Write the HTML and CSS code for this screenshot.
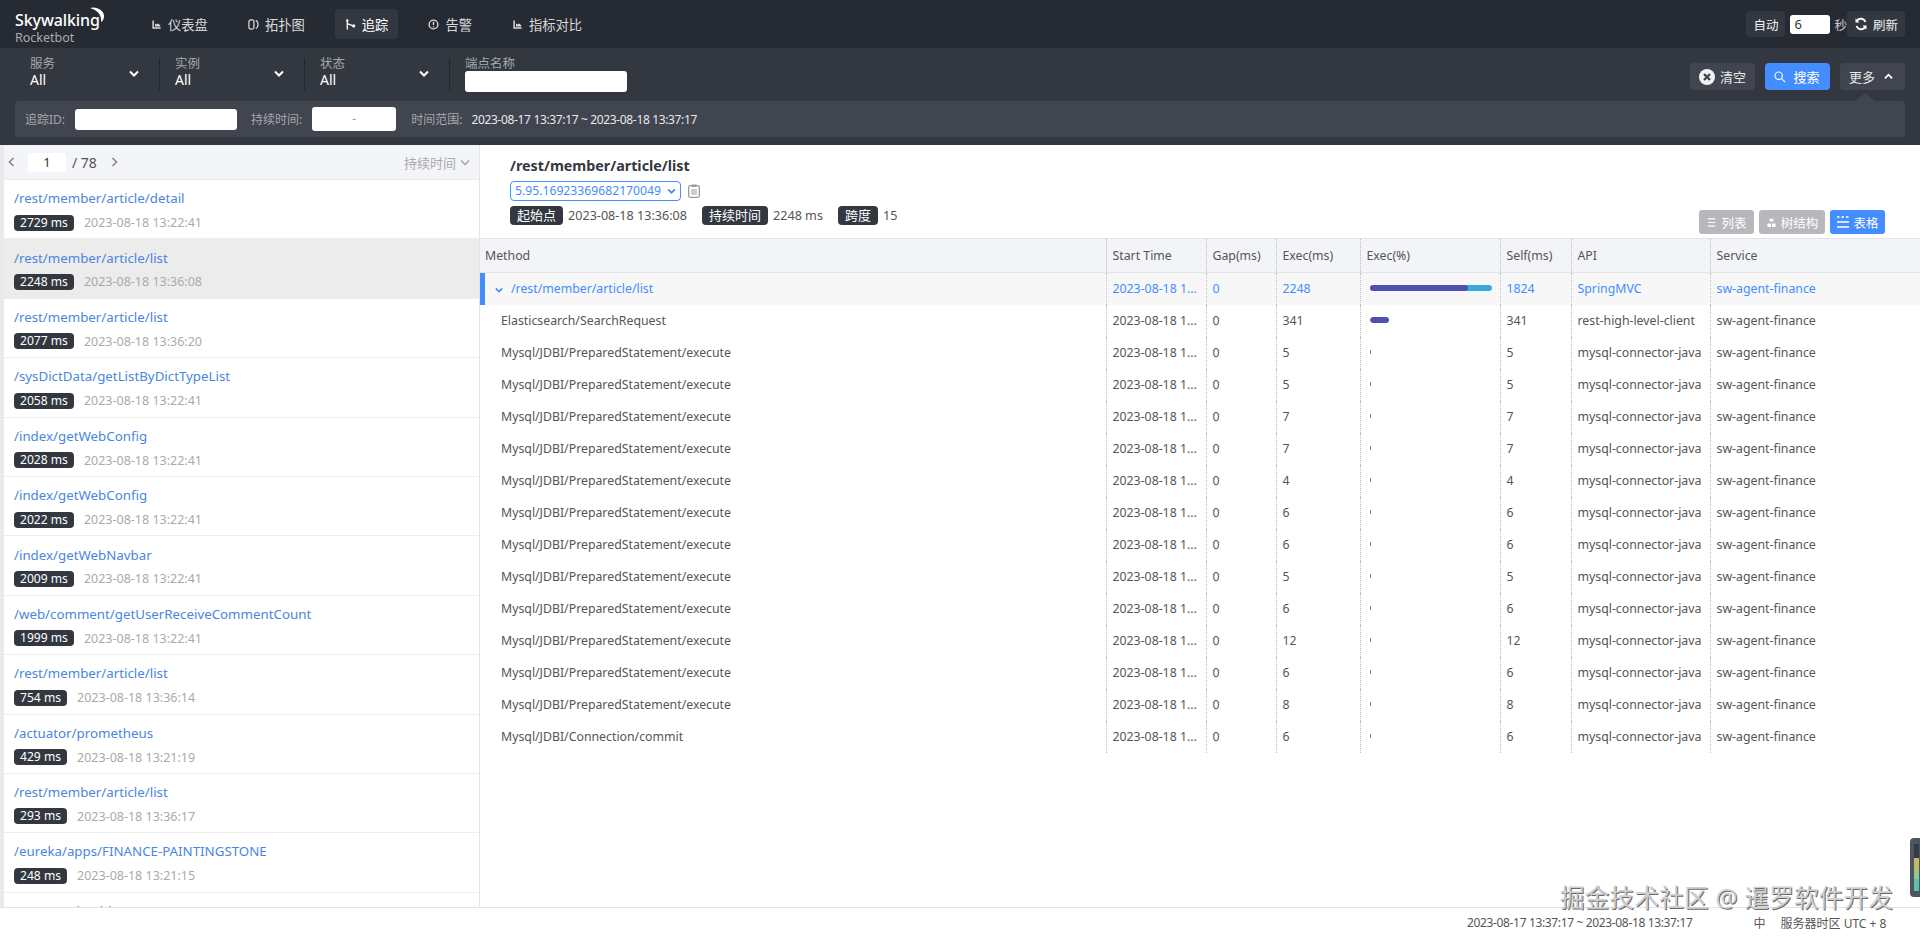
FILE: index.html
```html
<!DOCTYPE html>
<html lang="zh">
<head>
<meta charset="utf-8">
<title>Skywalking Rocketbot</title>
<link rel="stylesheet" href="styles.css">
</head>
<body>
<header class="topbar">
  <div class="logo">
    <div class="logo-main">Skywalking<svg class="logo-moon" viewBox="0 0 18 18"><path d="M2 2C8 0 16 4 16 10C16 13 15 15 13 16C14 10 10 4 2 2z" fill="#fff"/></svg></div>
    <div class="logo-sub">Rocketbot</div>
  </div>
  <nav class="nav">
    <a class="nav-item"><svg class="nav-icon" viewBox="0 0 12 12"><path d="M0.500 0.500v11h11v-2H2.500v-9z M4 8.500V4.500l2 1.500 2-1.500 3 2.500v1.500z" fill="currentColor"/></svg>仪表盘</a>
    <a class="nav-item"><svg class="nav-icon topo" viewBox="0 0 12 12"><rect x="1" y="1" width="5.500" height="10" rx="2" fill="none" stroke="currentColor" stroke-width="1.400"/><path d="M8.500 1.500c2 1 2.500 2.500 2.500 4.500s-.5 3.500-2.500 4.500" fill="none" stroke="currentColor" stroke-width="1.400"/></svg>拓扑图</a>
    <a class="nav-item active"><svg class="nav-icon topo" viewBox="0 0 12 12"><path d="M2.500 1v10.500M2.500 5 9 7.500" fill="none" stroke="currentColor" stroke-width="1.400"/><circle cx="2.500" cy="1.500" r="1.300" fill="currentColor"/><circle cx="9.500" cy="7.500" r="1.700" fill="currentColor"/></svg>追踪</a>
    <a class="nav-item"><svg class="nav-icon topo" viewBox="0 0 12 12"><circle cx="6" cy="6" r="4.800" fill="none" stroke="currentColor" stroke-width="1.500"/><path d="M6 3v3.500M6 7.800v1.200" stroke="currentColor" stroke-width="1.500"/></svg>告警</a>
    <a class="nav-item"><svg class="nav-icon" viewBox="0 0 12 12"><path d="M0.500 0.500v11h11v-2H2.500v-9z M4 8.500V4.500l2 1.500 2-1.500 3 2.500v1.500z" fill="currentColor"/></svg>指标对比</a>
  </nav>
  <div class="top-actions">
    <button class="btn-top">自动</button>
    <input class="auto-input" value="6">
    <span class="sec">秒</span>
    <button class="btn-top"><svg class="refresh" viewBox="0 0 14 14"><path d="M11.500 5A5 5 0 0 0 3 3.500M2.500 9A5 5 0 0 0 11 10.500" fill="none" stroke="#fff" stroke-width="2"/><path d="M1.500 1.500v4h4zM12.500 12.500v-4h-4z" fill="#fff"/></svg>刷新</button>
  </div>
</header>

<section class="filters">
  <div class="filter-row">
    <div class="drop"><div class="drop-text"><div class="drop-label">服务</div><div class="drop-val">All</div></div><svg class="chev" viewBox="0 0 10 7"><path d="M1 1.500 5 5.500 9 1.500" fill="none" stroke="#fff" stroke-width="2"/></svg></div>
    <div class="drop"><div class="drop-text"><div class="drop-label">实例</div><div class="drop-val">All</div></div><svg class="chev" viewBox="0 0 10 7"><path d="M1 1.500 5 5.500 9 1.500" fill="none" stroke="#fff" stroke-width="2"/></svg></div>
    <div class="drop"><div class="drop-text"><div class="drop-label">状态</div><div class="drop-val">All</div></div><svg class="chev" viewBox="0 0 10 7"><path d="M1 1.500 5 5.500 9 1.500" fill="none" stroke="#fff" stroke-width="2"/></svg></div>
    <div class="endpoint"><div class="drop-label">端点名称</div><input class="endpoint-input"></div>
    <div class="filter-actions">
      <button class="btn-f"><svg class="i-clear" viewBox="0 0 16 16"><circle cx="8" cy="8" r="8" fill="#f2f2f2"/><path d="M5 5l6 6M11 5l-6 6" stroke="#41454f" stroke-width="2.400"/></svg>清空</button>
      <button class="btn-f blue"><svg class="i-search" viewBox="0 0 14 14"><circle cx="5.500" cy="5.500" r="4.300" fill="none" stroke="#fff" stroke-width="1.300"/><path d="M8.800 8.800 13 13" stroke="#fff" stroke-width="1.300"/></svg>搜索</button>
      <button class="btn-f">更多<svg class="i-up" viewBox="0 0 10 7"><path d="M1 5.500 5 1.500 9 5.500" fill="none" stroke="#fff" stroke-width="2"/></svg></button>
    </div>
  </div>
  <div class="more-panel">
    <span class="more-label">追踪ID:</span><input class="id-input">
    <span class="more-label lbl-dur">持续时间:</span><div class="dur-input">-</div>
    <span class="more-label lbl-time">时间范围:</span><span class="more-val">2023-08-17 13:37:17 ~ 2023-08-18 13:37:17</span>
    <i class="more-arrow"></i>
  </div>
</section>

<main class="main">
  <aside class="side">
    <div class="pager">
      <svg class="pg-chev" viewBox="0 0 7 10"><path d="M5.500 1 1.500 5 5.500 9" fill="none" stroke="#888" stroke-width="1.600"/></svg>
      <div class="pg-input">1</div>
      <span class="pg-total">/ 78</span>
      <svg class="pg-chev" viewBox="0 0 7 10"><path d="M1.500 1 5.500 5 1.500 9" fill="none" stroke="#888" stroke-width="1.600"/></svg>
      <span class="pg-sort">持续时间<svg class="pg-down" viewBox="0 0 10 7"><path d="M1 1.500 5 5.500 9 1.500" fill="none" stroke="#aaa" stroke-width="1.600"/></svg></span>
    </div>
    <div class="item"><a class="item-link">/rest/member/article/detail</a><div class="item-meta"><span class="ms">2729 ms</span><span class="item-time">2023-08-18 13:22:41</span></div></div>
    <div class="item selected"><a class="item-link">/rest/member/article/list</a><div class="item-meta"><span class="ms">2248 ms</span><span class="item-time">2023-08-18 13:36:08</span></div></div>
    <div class="item"><a class="item-link">/rest/member/article/list</a><div class="item-meta"><span class="ms">2077 ms</span><span class="item-time">2023-08-18 13:36:20</span></div></div>
    <div class="item"><a class="item-link">/sysDictData/getListByDictTypeList</a><div class="item-meta"><span class="ms">2058 ms</span><span class="item-time">2023-08-18 13:22:41</span></div></div>
    <div class="item"><a class="item-link">/index/getWebConfig</a><div class="item-meta"><span class="ms">2028 ms</span><span class="item-time">2023-08-18 13:22:41</span></div></div>
    <div class="item"><a class="item-link">/index/getWebConfig</a><div class="item-meta"><span class="ms">2022 ms</span><span class="item-time">2023-08-18 13:22:41</span></div></div>
    <div class="item"><a class="item-link">/index/getWebNavbar</a><div class="item-meta"><span class="ms">2009 ms</span><span class="item-time">2023-08-18 13:22:41</span></div></div>
    <div class="item"><a class="item-link">/web/comment/getUserReceiveCommentCount</a><div class="item-meta"><span class="ms">1999 ms</span><span class="item-time">2023-08-18 13:22:41</span></div></div>
    <div class="item"><a class="item-link">/rest/member/article/list</a><div class="item-meta"><span class="ms">754 ms</span><span class="item-time">2023-08-18 13:36:14</span></div></div>
    <div class="item"><a class="item-link">/actuator/prometheus</a><div class="item-meta"><span class="ms">429 ms</span><span class="item-time">2023-08-18 13:21:19</span></div></div>
    <div class="item"><a class="item-link">/rest/member/article/list</a><div class="item-meta"><span class="ms">293 ms</span><span class="item-time">2023-08-18 13:36:17</span></div></div>
    <div class="item"><a class="item-link">/eureka/apps/FINANCE-PAINTINGSTONE</a><div class="item-meta"><span class="ms">248 ms</span><span class="item-time">2023-08-18 13:21:15</span></div></div>
    <div class="item"><a class="item-link">/actuator/health</a></div>
  </aside>

  <section class="detail">
    <div class="detail-head">
      <div class="detail-info">
        <h1 class="detail-title">/rest/member/article/list</h1>
        <div class="trace-line">
          <div class="trace-select"><span>5.95.16923369682170049</span><svg class="sel-chev" viewBox="0 0 10 7"><path d="M1 1.500 5 5.500 9 1.500" fill="none" stroke="#448dfe" stroke-width="2"/></svg></div>
          <svg class="i-clip" viewBox="0 0 12 14"><rect x="0.700" y="1.700" width="10.600" height="11.600" rx="1.500" fill="none" stroke="#999" stroke-width="1.300"/><rect x="3.500" y="0.500" width="5" height="2.500" fill="#999"/><path d="M3 6h6M3 8h6M3 10h6" stroke="#999"/></svg>
        </div>
        <div class="trace-meta">
          <span class="tag">起始点</span><span class="meta-v">2023-08-18 13:36:08</span>
          <span class="tag">持续时间</span><span class="meta-v">2248 ms</span>
          <span class="tag">跨度</span><span class="meta-v">15</span>
        </div>
      </div>
      <div class="views">
        <button class="view"><svg class="view-i" viewBox="0 0 12 12"><path d="M2 2h8M2 6h8M2 10h8" stroke="#fff" stroke-width="1.200"/></svg>列表</button>
        <button class="view wide"><svg class="view-i" viewBox="0 0 12 12"><path d="M4 2h4v3H4zM1.500 7h4v4h-4zM6.500 7h4v4h-4z" fill="#fff"/></svg>树结构</button>
        <button class="view on"><svg class="view-i big" viewBox="0 0 14 14"><path d="M1 2h2.500M5.500 2H8M10 2h2.500M1 7h12M1 12h12" stroke="#fff" stroke-width="1.600"/></svg>表格</button>
      </div>
    </div>
    <table class="spans">
      <colgroup><col class="c1"><col class="c2"><col class="c3"><col class="c4"><col class="c5"><col class="c6"><col class="c7"><col class="c8"></colgroup>
      <thead><tr><th>Method</th><th>Start Time</th><th>Gap(ms)</th><th>Exec(ms)</th><th>Exec(%)</th><th>Self(ms)</th><th>API</th><th>Service</th></tr></thead>
      <tbody id="rows">
        <tr class="root"><td class="m root-m"><svg class="root-chev" viewBox="0 0 10 7"><path d="M1 1.500 5 5.500 9 1.500" fill="none" stroke="#448dfe" stroke-width="2"/></svg>/rest/member/article/list</td><td>2023-08-18 1...</td><td>0</td><td>2248</td><td class="pc"><div class="track"><div class="fill" style="width:81%"></div></div></td><td>1824</td><td>SpringMVC</td><td>sw-agent-finance</td></tr>
        <tr><td class="m">Elasticsearch/SearchRequest</td><td>2023-08-18 1...</td><td>0</td><td>341</td><td class="pc"><div class="track none"><div class="fill" style="width:16%"></div></div></td><td>341</td><td>rest-high-level-client</td><td>sw-agent-finance</td></tr>
        <tr><td class="m">Mysql/JDBI/PreparedStatement/execute</td><td>2023-08-18 1...</td><td>0</td><td>5</td><td class="pc"><div class="track none"><div class="fill tiny"></div></div></td><td>5</td><td>mysql-connector-java</td><td>sw-agent-finance</td></tr>
        <tr><td class="m">Mysql/JDBI/PreparedStatement/execute</td><td>2023-08-18 1...</td><td>0</td><td>5</td><td class="pc"><div class="track none"><div class="fill tiny"></div></div></td><td>5</td><td>mysql-connector-java</td><td>sw-agent-finance</td></tr>
        <tr><td class="m">Mysql/JDBI/PreparedStatement/execute</td><td>2023-08-18 1...</td><td>0</td><td>7</td><td class="pc"><div class="track none"><div class="fill tiny"></div></div></td><td>7</td><td>mysql-connector-java</td><td>sw-agent-finance</td></tr>
        <tr><td class="m">Mysql/JDBI/PreparedStatement/execute</td><td>2023-08-18 1...</td><td>0</td><td>7</td><td class="pc"><div class="track none"><div class="fill tiny"></div></div></td><td>7</td><td>mysql-connector-java</td><td>sw-agent-finance</td></tr>
        <tr><td class="m">Mysql/JDBI/PreparedStatement/execute</td><td>2023-08-18 1...</td><td>0</td><td>4</td><td class="pc"><div class="track none"><div class="fill tiny"></div></div></td><td>4</td><td>mysql-connector-java</td><td>sw-agent-finance</td></tr>
        <tr><td class="m">Mysql/JDBI/PreparedStatement/execute</td><td>2023-08-18 1...</td><td>0</td><td>6</td><td class="pc"><div class="track none"><div class="fill tiny"></div></div></td><td>6</td><td>mysql-connector-java</td><td>sw-agent-finance</td></tr>
        <tr><td class="m">Mysql/JDBI/PreparedStatement/execute</td><td>2023-08-18 1...</td><td>0</td><td>6</td><td class="pc"><div class="track none"><div class="fill tiny"></div></div></td><td>6</td><td>mysql-connector-java</td><td>sw-agent-finance</td></tr>
        <tr><td class="m">Mysql/JDBI/PreparedStatement/execute</td><td>2023-08-18 1...</td><td>0</td><td>5</td><td class="pc"><div class="track none"><div class="fill tiny"></div></div></td><td>5</td><td>mysql-connector-java</td><td>sw-agent-finance</td></tr>
        <tr><td class="m">Mysql/JDBI/PreparedStatement/execute</td><td>2023-08-18 1...</td><td>0</td><td>6</td><td class="pc"><div class="track none"><div class="fill tiny"></div></div></td><td>6</td><td>mysql-connector-java</td><td>sw-agent-finance</td></tr>
        <tr><td class="m">Mysql/JDBI/PreparedStatement/execute</td><td>2023-08-18 1...</td><td>0</td><td>12</td><td class="pc"><div class="track none"><div class="fill tiny"></div></div></td><td>12</td><td>mysql-connector-java</td><td>sw-agent-finance</td></tr>
        <tr><td class="m">Mysql/JDBI/PreparedStatement/execute</td><td>2023-08-18 1...</td><td>0</td><td>6</td><td class="pc"><div class="track none"><div class="fill tiny"></div></div></td><td>6</td><td>mysql-connector-java</td><td>sw-agent-finance</td></tr>
        <tr><td class="m">Mysql/JDBI/PreparedStatement/execute</td><td>2023-08-18 1...</td><td>0</td><td>8</td><td class="pc"><div class="track none"><div class="fill tiny"></div></div></td><td>8</td><td>mysql-connector-java</td><td>sw-agent-finance</td></tr>
        <tr><td class="m">Mysql/JDBI/Connection/commit</td><td>2023-08-18 1...</td><td>0</td><td>6</td><td class="pc"><div class="track none"><div class="fill tiny"></div></div></td><td>6</td><td>mysql-connector-java</td><td>sw-agent-finance</td></tr>
      </tbody>
    </table>
  </section>
</main>

<footer class="footer">
  <span class="foot-range">2023-08-17 13:37:17 ~ 2023-08-18 13:37:17</span>
  <span class="foot-lang">中</span>
  <span class="foot-tz">服务器时区 UTC + 8</span>
</footer>

<div class="watermark">掘金技术社区 @ 暹罗软件开发</div>
<div class="widget"><div class="widget-bars"></div></div>
</body>
</html>
```
FILE: styles.css
```css
* { box-sizing: border-box; }
html, body { margin: 0; height: 100%; overflow: hidden; }
body {
  display: flex;
  flex-direction: column;
  font-family: "Noto Sans", "Noto Sans CJK SC", sans-serif;
  font-size: 13px;
  color: #3d444f;
  background: #fff;
  position: relative;
}
button { font-family: inherit; border: 0; padding: 0; }

/* top bar */
.topbar {
  height: 48px;
  flex: none;
  display: flex;
  align-items: center;
  background: #252a33;
  color: #e8e9ea;
  padding: 0 15px;
}
.logo { width: 126px; flex: none; padding-top: 8px; }
.logo-main { font-size: 16px; line-height: 18px; font-weight: 500; color: #fff; position: relative; letter-spacing: -0.1px; }
.logo-moon { position: absolute; left: 73px; top: -5px; width: 18px; height: 18px; }
.logo-sub { font-size: 12.500px; line-height: 16px; margin-top: 1px; color: #a9acb0; }
.nav { display: flex; }
.nav-item {
  height: 30px;
  display: flex;
  align-items: center;
  padding: 0 10px;
  margin-right: 20px;
  border-radius: 4px;
  font-size: 13.300px;
  color: #d8d9db;
}
.nav-item.active { background: #333840; color: #fff; }
.nav-icon { width: 9px; height: 9px; margin: 0 7px 0 1px; flex: none; }
.nav-icon.topo { width: 11px; height: 11px; margin: 0 6px 0 0; }
.top-actions { margin-left: auto; display: flex; align-items: center; }
.btn-top {
  height: 26px;
  padding: 0 7px;
  border-radius: 4px;
  background: #333840;
  color: #f2f2f2;
  font-size: 12.500px;
  display: flex;
  align-items: center;
}
.auto-input {
  width: 40px;
  height: 19px;
  margin-left: 5px;
  border: 0;
  border-radius: 3px;
  padding: 0 4px;
  font: 13px "Noto Sans", sans-serif;
  color: #333;
}
.sec { font-size: 12.500px; color: #ccc; margin: 0 0 0 4px; }
.refresh { width: 14px; height: 14px; margin-right: 5px; }

/* filters */
.filters {
  height: 97px;
  flex: none;
  background: #333840;
  padding: 8px 15px 8px;
  display: flex;
  flex-direction: column;
  position: relative;
}
.filter-row { display: flex; height: 35px; align-items: center; margin-bottom: 10px; }
.drop {
  width: 145px;
  height: 32px;
  padding: 0 20px 0 15px;
  display: flex;
  align-items: center;
  justify-content: space-between;
  border-right: 1px solid #22262d;
}
.drop-text { margin-top: -2px; }
.drop-label { font-size: 12.500px; line-height: 14px; color: #a5a8ac; }
.drop-val { font-size: 14px; line-height: 18px; color: #fff; }
.chev { width: 10px; height: 7px; }
.endpoint { margin-left: 15px; }
.endpoint .drop-label { line-height: 13px; margin-top: 2px; }
.endpoint-input { display: block; width: 162px; height: 21px; border: 0; border-radius: 3px; background: #fff; margin-top: 1px; }
.filter-actions { margin-left: auto; display: flex; gap: 10px; margin-top: 6px; }
.btn-f {
  width: 65px;
  height: 27px;
  border-radius: 4px;
  background: #41454f;
  color: #e8e9ea;
  font-size: 13px;
  display: flex;
  align-items: center;
  justify-content: center;
}
.btn-f.blue { background: #448dfe; color: #fff; }
.i-clear { width: 16px; height: 16px; margin-right: 5px; }
.i-search { width: 12px; height: 12px; margin-right: 7px; margin-left: -1px; }
.i-up { width: 9px; height: 7px; margin: 0 3px 0 9px; }
.more-panel {
  height: 36px;
  border-radius: 3px;
  background: #41454f;
  display: flex;
  align-items: center;
  padding-left: 10px;
  position: relative;
}
.more-label { font-size: 12px; color: #a5a8ac; white-space: nowrap; }
.id-input { width: 162px; height: 21px; border: 0; border-radius: 3px; margin-left: 10px; background: #fff; }
.lbl-dur { margin-left: 14px; }
.dur-input { width: 84px; height: 24px; margin-left: 10px; border-radius: 3px; background: #fff; color: #999; text-align: center; font-size: 12px; line-height: 24px; }
.lbl-time { margin-left: 15px; }
.more-val { margin-left: 9px; font-size: 12px; letter-spacing: -0.350px; color: #e8e9ea; white-space: nowrap; }
.more-arrow {
  position: absolute;
  right: 30px;
  top: -8px;
  width: 0;
  height: 0;
  border-left: 10px solid transparent;
  border-right: 10px solid transparent;
  border-bottom: 8px solid #41454f;
}

/* main */
.main { flex: 1; min-height: 0; display: flex; background: #fff; }
.side {
  width: 480px;
  flex: none;
  overflow: hidden;
  border-right: 1px solid #e4e4e4;
  border-left: 4px solid #eaeaea;
  background: #fff;
}
.pager {
  height: 35px;
  margin-left: -4px;
  display: flex;
  align-items: center;
  padding: 0 8px 0 8px;
  background: #f3f5f9;
  border-bottom: 1px solid #ebecef;
  color: #555;
}
.pg-chev { width: 7px; height: 10px; flex: none; }
.pg-input { width: 38px; height: 19px; margin: 0 6px 0 13px; background: #fff; border-radius: 3px; text-align: center; font-size: 13px; line-height: 19px; color: #333; }
.pg-total { font-size: 14px; margin-right: 14px; color: #555; }
.pg-sort { margin-left: auto; font-size: 13px; color: #aaa; display: flex; align-items: center; }
.pg-down { width: 10px; height: 7px; margin-left: 4px; margin-right: 1px; }
.item {
  height: 59.4px;
  padding: 8.200px 10px 0;
  border-bottom: 1px solid #eee;
  overflow: hidden;
}
.item.selected { background: #ececec; }
.item-link { display: block; font-size: 13.300px; line-height: 20px; color: #4a86e0; }
.item-meta { display: flex; align-items: center; margin-top: 5.900px; }
.ms { height: 16px; padding: 0 6px; border-radius: 4px; background: #333840; color: #fff; font-size: 12.100px; line-height: 16px; }
.item-time { margin-left: 10px; font-size: 12.500px; color: #aaa; }

/* detail */
.detail { flex: 1; min-width: 0; }
.detail-head { height: 93px; display: flex; justify-content: space-between; padding: 10px 35px 0 30px; }
.detail-title { margin: 0; font-size: 14.300px; line-height: 22px; font-weight: 700; color: #333840; }
.trace-line { display: flex; align-items: center; margin-top: 4px; }
.trace-select {
  width: 171px;
  height: 20px;
  border: 1px solid #448dfe;
  border-radius: 4px;
  color: #448dfe;
  font-size: 12.200px;
  line-height: 18px;
  padding-left: 4px;
  display: flex;
  align-items: center;
  justify-content: space-between;
}
.sel-chev { width: 9px; height: 6px; margin-right: 4px; }
.i-clip { width: 12px; height: 14px; margin-left: 7px; }
.trace-meta { display: flex; align-items: center; margin-top: 5px; }
.tag { height: 19px; padding: 0 7px; border-radius: 4px; background: #333840; color: #fff; font-size: 13px; line-height: 19px; }
.meta-v { margin: 0 15px 0 5px; font-size: 12.600px; color: #555; }
.views { display: flex; gap: 5px; margin-top: 55px; height: 24px; }
.view { width: 55px; height: 24px; border-radius: 3px; background: #b6b8bc; color: #fff; font-size: 12.500px; display: flex; align-items: center; justify-content: center; }
.view.wide { width: 66px; }
.view.on { background: #448dfe; }
.view-i { width: 11px; height: 11px; margin-right: 4px; }
.view-i.big { width: 14px; height: 14px; margin-right: 3px; }
.spans { width: 1440px; table-layout: fixed; border-collapse: collapse; font-size: 12.300px; }
.c1 { width: 626px; }
.c2 { width: 100px; }
.c3 { width: 70px; }
.c4 { width: 84px; }
.c5 { width: 140px; }
.c6 { width: 71px; }
.c7 { width: 139px; }
.c8 { width: 210px; }
.spans th {
  height: 34px;
  padding: 0 6px 1px 6px;
  text-align: left;
  font-weight: 400;
  color: #555;
  background: #f3f4f7;
  border-top: 1px solid #e3e4e7;
  border-bottom: 1px solid #e3e4e7;
  border-left: 1px dotted #bbb;
}
.spans th:first-child { border-left: 0; padding-left: 5px; }
.spans td {
  height: 32px;
  padding: 0 6px 1px 6px;
  white-space: nowrap;
  overflow: hidden;
  color: #555;
  border-left: 1px dotted #bbb;
}
.spans td:first-child { border-left: 0; }
.spans td.m { padding-left: 21px; }
.root td { background: #f7f7f7; color: #448dfe; }
.spans td.root-m { padding-left: 15px; box-shadow: inset 5px 0 #448dfe; }
.root-chev { width: 8px; height: 6px; margin-right: 8px; }
.spans td.pc { padding: 12px 8px 0 9px; vertical-align: top; }
.track { width: 122px; height: 6px; border-radius: 3px; background: #38a8e0; overflow: hidden; }
.track.none { background: transparent; }
.fill { height: 6px; border-radius: 3px; background: #5050b0; }
.fill.tiny { width: 1px; border-radius: 0; background: #6a6ac0; }

/* footer */
.footer {
  height: 30px;
  flex: none;
  border-top: 1px solid #e4e4e4;
  display: flex;
  align-items: center;
  font-size: 12px;
  color: #555;
  background: #fff;
}
.foot-range { margin-left: 1467px; letter-spacing: -0.350px; }
.foot-lang { margin-left: 61px; }
.foot-tz { margin-left: 15px; }

/* overlays */
.watermark {
  position: absolute;
  left: 1560px;
  top: 882px;
  font-size: 24.500px;
  line-height: 32px;
  letter-spacing: 0.300px;
  white-space: nowrap;
  color: #cfcfcf;
  text-shadow: 1px 1px 0 #6a6a6a;
}
.widget {
  position: absolute;
  left: 1910px;
  top: 838px;
  width: 10px;
  height: 59px;
  border-radius: 4px 0 0 4px;
  background: #4c5560;
  padding: 6px 1px 6px 4px;
}
.widget-bars { width: 5px; height: 100%; background: linear-gradient(#333b48 0 30%, #c8b964 30% 55%, #8fc98f 55% 75%, #5cc2a6 75%); }
```
